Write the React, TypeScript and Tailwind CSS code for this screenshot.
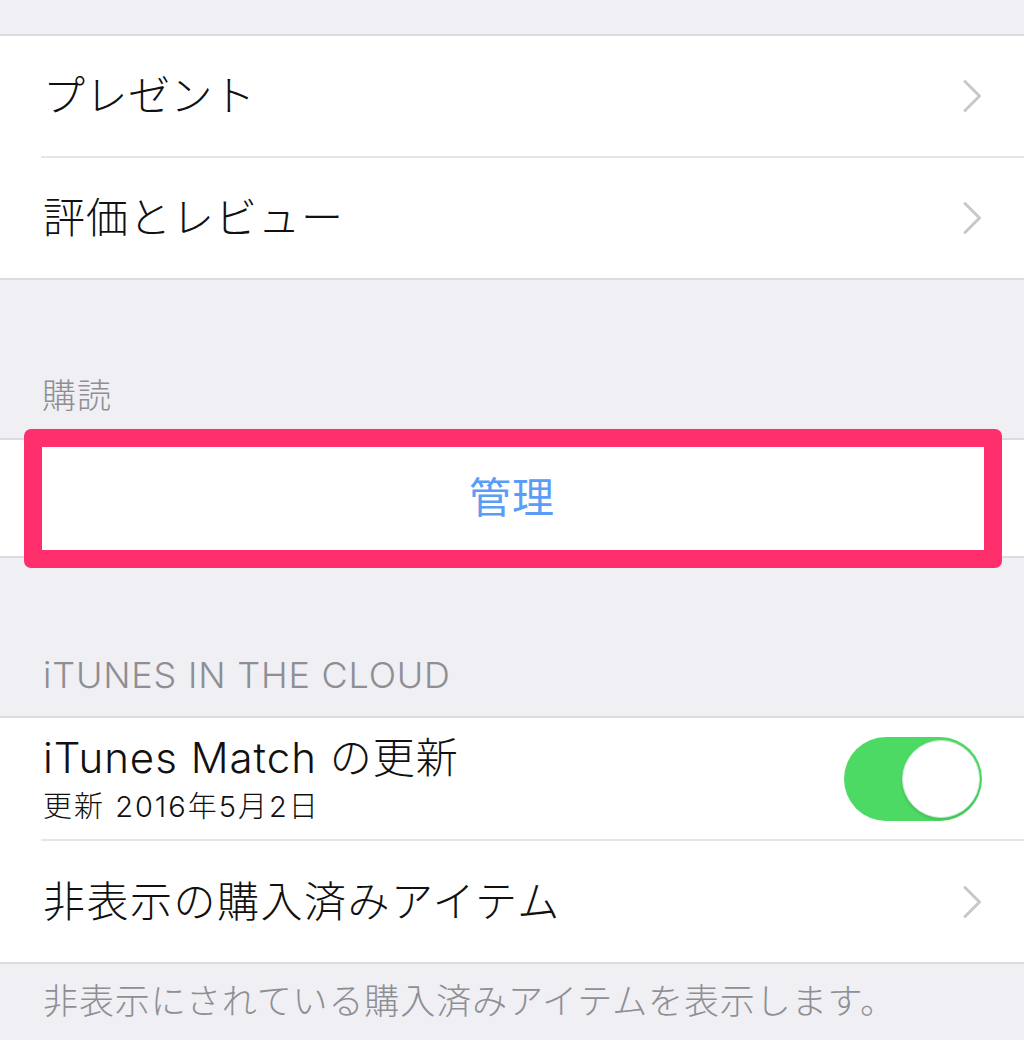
import React from "react";

const Chevron = () => (
  <svg width="20" height="34" viewBox="0 0 20 34" fill="none" className="shrink-0">
    <path d="M3 2.5 L17.5 17 L3 31.5" stroke="#c7c7cc" strokeWidth="3" strokeLinecap="round" strokeLinejoin="round" />
  </svg>
);

const NavRow = ({ label, track }: { label: string; track: string }) => (
  <div className="h-[120px] flex items-center justify-between pl-[43px] pr-[42px]">
    <span className={`text-[42px] leading-none text-[#111] font-light ${track}`}>{label}</span>
    <Chevron />
  </div>
);

const Sep = () => <div className="ml-[41px] h-[2px] bg-[#e6e6ea]" />;

export default function App() {
  return (
    <div className="w-[1024px] h-[1040px] overflow-hidden bg-[#efeff4] font-['Inter','Noto_Sans_CJK_JP',sans-serif]">
      <div className="h-[34px]" />
      <div className="border-y-2 border-[#dcdce0] bg-white">
        <NavRow label="プレゼント" track="tracking-[0.5px]" />
        <Sep />
        <NavRow label="評価とレビュー" track="tracking-[1px]" />
      </div>

      <div className="h-[158px] pt-[99px] px-[42px]">
        <div className="text-[34px] leading-none text-[#8e8e93] font-light tracking-[1px]">購読</div>
      </div>

      <div className="relative border-y-2 border-[#dcdce0] bg-white">
        <div className="h-[116px] flex items-center justify-center">
          <span className="text-[42px] leading-none text-[#5b9cf6] tracking-[1px]">管理</span>
        </div>
        <div className="absolute -top-[11px] -bottom-[12px] left-[24px] right-[22px] rounded-[7px] border-[18px] border-[#ff2f6d]" />
      </div>

      <div className="h-[158px] pt-[99px] px-[43px]">
        <div className="text-[36px] leading-none text-[#8e8e93] font-light tracking-[0.8px]">iTUNES IN THE CLOUD</div>
      </div>

      <div className="border-y-2 border-[#dcdce0] bg-white">
        <div className="h-[121px] flex items-center justify-between pl-[43px] pr-[42px]">
          <div className="flex flex-col">
            <span className="text-[42px] leading-none text-[#111] font-light tracking-[1px]">iTunes Match の更新</span>
            <span className="mt-[13px] text-[29px] leading-none text-[#111] font-light tracking-[2px]">更新 2016年5月2日</span>
          </div>
          <div className="relative w-[138px] h-[84px] rounded-full bg-[#4cd964] shrink-0">
            <div className="absolute right-[2px] top-[3px] w-[78px] h-[78px] rounded-full bg-white border border-[#c9e8cf] shadow-[0_2px_3px_rgba(0,0,0,0.12)]" />
          </div>
        </div>
        <Sep />
        <div className="h-[121px] flex items-center justify-between pl-[43px] pr-[42px]">
          <span className="text-[42px] leading-none text-[#111] font-light tracking-[1.5px]">非表示の購入済みアイテム</span>
          <Chevron />
        </div>
      </div>

      <div className="pt-[20px] px-[43px]">
        <div className="text-[35px] leading-none text-[#8e8e93] font-light tracking-[0.9px]">非表示にされている購入済みアイテムを表示します。</div>
      </div>
    </div>
  );
}
